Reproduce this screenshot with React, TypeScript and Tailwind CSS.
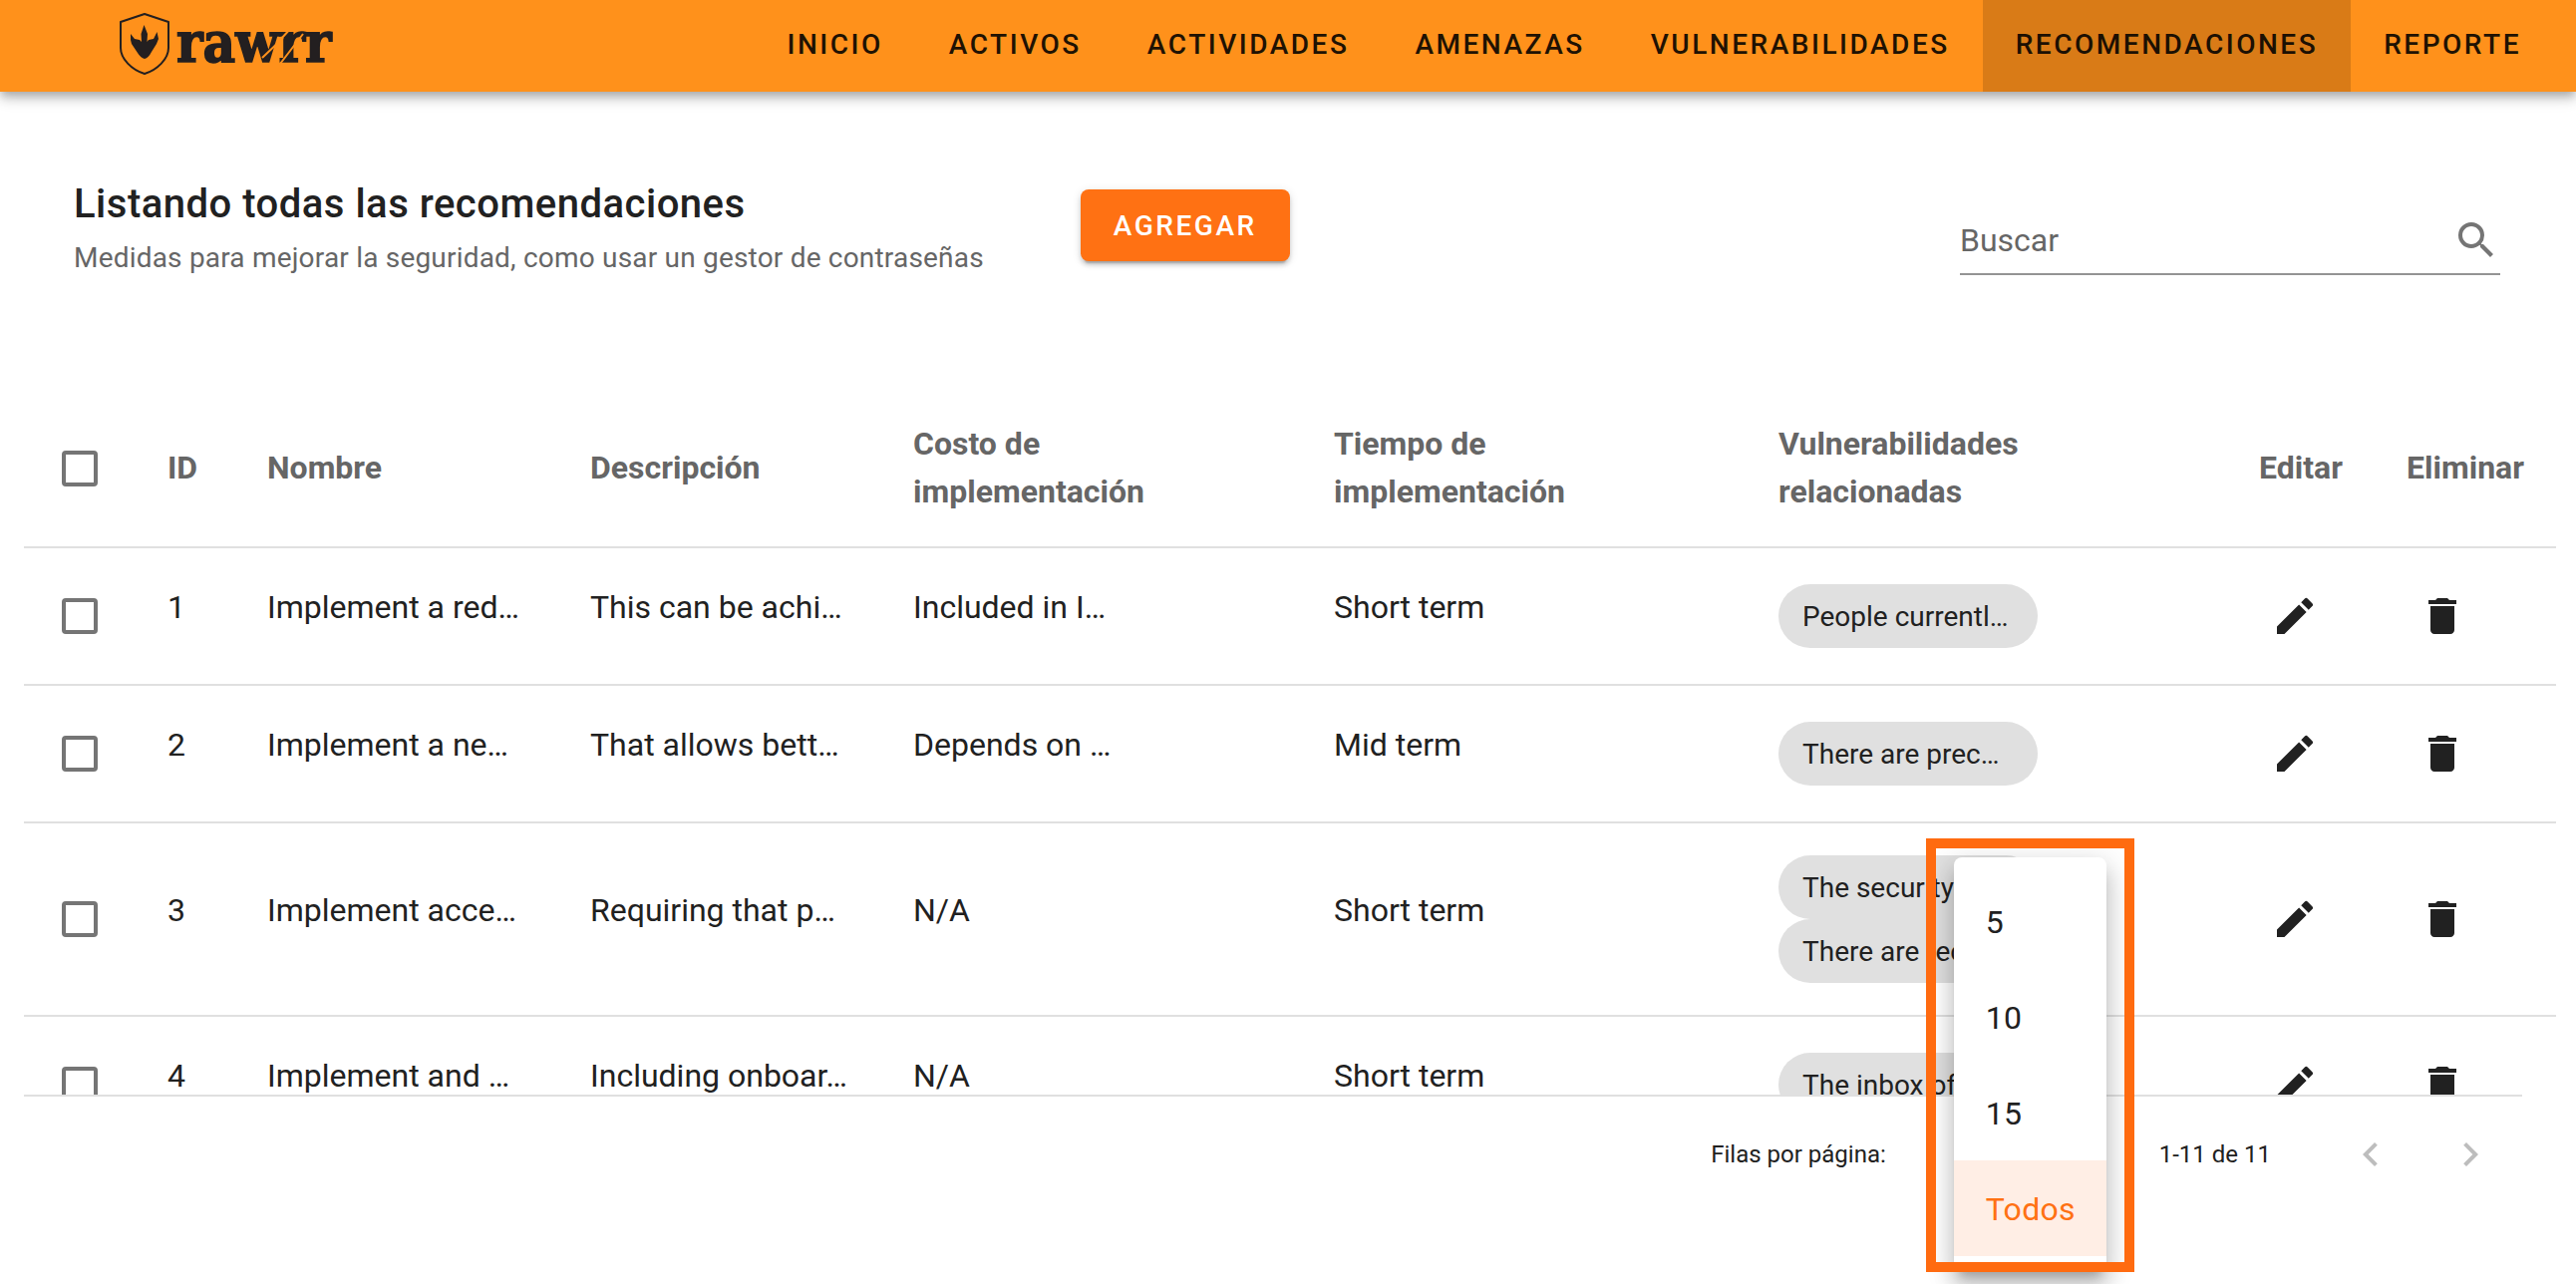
import React, { useState } from "react";
import { MdChevronLeft, MdChevronRight, MdDelete, MdEdit, MdSearch } from "react-icons/md";

type Recommendation = {
  id: number;
  name: string;
  description: string;
  cost: string;
  time: string;
  vulnerabilities: string[];
};

const navItems = [
  "Inicio",
  "Activos",
  "Actividades",
  "Amenazas",
  "Vulnerabilidades",
  "Recomendaciones",
  "Reporte",
];

const rows: Recommendation[] = [
  {
    id: 1,
    name: "Implement a red…",
    description: "This can be achi…",
    cost: "Included in I…",
    time: "Short term",
    vulnerabilities: ["People currentl…"],
  },
  {
    id: 2,
    name: "Implement a ne…",
    description: "That allows bett…",
    cost: "Depends on …",
    time: "Mid term",
    vulnerabilities: ["There are prec…"],
  },
  {
    id: 3,
    name: "Implement acce…",
    description: "Requiring that p…",
    cost: "N/A",
    time: "Short term",
    vulnerabilities: ["The security …", "There are rec…"],
  },
  {
    id: 4,
    name: "Implement and …",
    description: "Including onboar…",
    cost: "N/A",
    time: "Short term",
    vulnerabilities: ["The inbox of …"],
  },
];

const pageSizes = ["5", "10", "15", "Todos"];

function Logo() {
  return (
    <svg viewBox="0 0 220 64" className="h-16 w-[220px] overflow-visible" role="img" aria-label="rawrr">
      <path
        d="M25 2 L49 10 V36 C49 47 38 58 25 62 C12 58 1 47 1 36 V10 Z"
        fill="none"
        stroke="#231f20"
        strokeWidth="2"
        strokeLinejoin="round"
      />
      <path
        d="M11 22 L15 27 L20 28 L22 30 L21.5 22 L24.5 13 L28 22 L27.5 30 L29 28 L34 27 L37.5 20 L39 27 L37 32 L32 40 Q29 46 25 47 Q21 46 18 41 L12 32 L11 28 Z"
        fill="#231f20"
      />
      <text
        x="57"
        y="50"
        fill="#231f20"
        stroke="#231f20"
        strokeWidth="1.5"
        fontSize="56"
        fontWeight="700"
        fontFamily="'DejaVu Serif Condensed','DejaVu Serif',serif"
      >
        rawrr
      </text>
      <path d="M143 46 L164 26 M161 52 L184 22 M161 28 L173 15" stroke="#ff911b" strokeWidth="2" />
    </svg>
  );
}

function Checkbox({ label }: { label: string }) {
  return (
    <input
      type="checkbox"
      aria-label={label}
      className="block size-9 appearance-none rounded border-4 border-[#757575] checked:bg-[#ff7113]"
    />
  );
}

function Header() {
  return (
    <header className="relative z-10 flex h-[92px] items-stretch justify-between bg-[#ff911b] pl-[120px] pr-[22px] shadow-[0_4px_8px_-2px_rgba(0,0,0,0.2),0_8px_10px_0_rgba(0,0,0,0.14),0_2px_20px_0_rgba(0,0,0,0.12)]">
      <a href="#inicio" className="flex items-center pb-1">
        <Logo />
      </a>
      <nav className="flex">
        {navItems.map((item) => (
          <a
            key={item}
            href={"#" + item.toLowerCase()}
            className={
              item === "Recomendaciones"
                ? "flex items-center bg-[#d97b17] px-[33px] pb-0.5 text-[28px] font-medium uppercase tracking-[0.09em] text-[#1c1003]"
                : "flex items-center px-[33px] pb-0.5 text-[28px] font-medium uppercase tracking-[0.09em] text-[#1f1203]"
            }
          >
            {item}
          </a>
        ))}
      </nav>
    </header>
  );
}

function Toolbar() {
  return (
    <section className="flex items-start pl-[74px] pr-[76px] pt-20">
      <div className="pt-px">
        <h1 className="text-[40px] font-medium leading-[64px] tracking-[0.0125em]">
          Listando todas las recomendaciones
        </h1>
        <p className="mt-1 text-[28px] leading-9 tracking-[0.007em] text-[#666]">
          Medidas para mejorar la seguridad, como usar un gestor de contraseñas
        </p>
      </div>
      <button
        type="button"
        className="ml-[97px] mt-[18px] h-[72px] rounded-lg bg-[#ff7113] px-[33px] pt-0.5 text-[28px] font-medium uppercase tracking-[0.09em] text-white shadow-[0_6px_2px_-4px_rgba(0,0,0,0.2),0_4px_4px_0_rgba(0,0,0,0.14),0_2px_10px_0_rgba(0,0,0,0.12)]"
      >
        Agregar
      </button>
      <label className="ml-auto mt-11 flex h-[60px] w-[542px] items-center border-b-2 border-[#949494] pb-2">
        <input
          type="text"
          placeholder="Buscar"
          aria-label="Buscar"
          className="min-w-0 flex-1 bg-transparent text-[32px] outline-none placeholder:text-[#666]"
        />
        <MdSearch className="size-12 text-[#757575]" />
      </label>
    </section>
  );
}

function RecommendationTable() {
  return (
    <div className="ml-6 mr-5 mt-[114px] h-[707px] overflow-hidden">
      <table className="w-full table-fixed border-collapse text-left text-[32px] leading-[48px]">
        <colgroup>
          <col className="w-[112px]" />
          <col className="w-[100px]" />
          <col className="w-[324px]" />
          <col className="w-[324px]" />
          <col className="w-[422px]" />
          <col className="w-[446px]" />
          <col />
          <col className="w-[148px]" />
          <col className="w-[182px]" />
        </colgroup>
        <thead>
          <tr className="h-[158px] border-b-2 border-[#e0e0e0] text-[#666]">
            <th className="pl-[38px]">
              <Checkbox label="Seleccionar todas" />
            </th>
            <th className="pb-0.5 pl-8 font-bold">ID</th>
            <th className="pb-0.5 pl-8 font-bold">Nombre</th>
            <th className="pb-0.5 pl-8 font-bold">Descripción</th>
            <th className="pb-0.5 pl-8 pr-24 font-bold">Costo de implementación</th>
            <th className="pb-0.5 pl-8 pr-32 font-bold">Tiempo de implementación</th>
            <th className="pb-0.5 pl-8 pr-32 font-bold">Vulnerabilidades relacionadas</th>
            <th className="pb-0.5 pl-8 font-bold">Editar</th>
            <th className="pb-0.5 pl-8 font-bold">Eliminar</th>
          </tr>
        </thead>
        <tbody>
          {rows.map((row) => (
            <tr key={row.id} className="h-[138px] border-b-2 border-[#e0e0e0]">
              <td className="pl-[38px]">
                <Checkbox label={"Seleccionar " + row.id} />
              </td>
              <td className="pb-[18px] pl-8">{row.id}</td>
              <td className="pb-[18px] pl-8">{row.name}</td>
              <td className="pb-[18px] pl-8">{row.description}</td>
              <td className="pb-[18px] pl-8">{row.cost}</td>
              <td className="pb-[18px] pl-8">{row.time}</td>
              <td className="py-8 pl-8">
                {row.vulnerabilities.map((v) => (
                  <span
                    key={v}
                    className="flex h-16 w-[260px] items-center whitespace-nowrap rounded-full bg-[#e0e0e0] px-6 pt-0.5 text-[28px]"
                  >
                    {v}
                  </span>
                ))}
              </td>
              <td className="pl-8">
                <button type="button" aria-label={"Editar " + row.id} className="block p-3">
                  <MdEdit className="size-12" />
                </button>
              </td>
              <td className="pl-8">
                <button type="button" aria-label={"Eliminar " + row.id} className="block p-3">
                  <MdDelete className="size-12" />
                </button>
              </td>
            </tr>
          ))}
        </tbody>
      </table>
    </div>
  );
}

function PageSizeMenu() {
  const [selected, setSelected] = useState("Todos");
  return (
    <div className="relative ml-10 w-[209px] self-stretch">
      <div
        role="listbox"
        aria-label="Filas por página"
        className="absolute -bottom-[60px] left-7 w-[153px] rounded-lg bg-white py-4 shadow-[0_10px_10px_-6px_rgba(0,0,0,0.2),0_16px_20px_2px_rgba(0,0,0,0.14),0_6px_28px_4px_rgba(0,0,0,0.12)]"
      >
        {pageSizes.map((size) => (
          <button
            key={size}
            type="button"
            role="option"
            aria-selected={size === selected}
            onClick={() => setSelected(size)}
            className={
              size === selected
                ? "block h-24 w-full bg-[#ffeee5] pl-8 pt-0.5 text-left text-[32px] tracking-[0.01em] text-[#ff7113]"
                : "block h-24 w-full pl-8 pt-0.5 text-left text-[32px] tracking-[0.01em]"
            }
          >
            {size}
          </button>
        ))}
      </div>
      <div className="pointer-events-none absolute inset-x-0 -bottom-[60px] h-[435px] border-[10px] border-[#ff6b10]" />
    </div>
  );
}

function Pagination() {
  return (
    <footer className="ml-6 mr-[54px] flex h-[118px] items-center justify-end border-t-2 border-[#e0e0e0] pr-1 text-[24px]">
      <span>Filas por página:</span>
      <PageSizeMenu />
      <span className="ml-[25px] mr-[52px]">1-11 de 11</span>
      <div className="flex gap-1 text-[#bdbdbd]">
        <button type="button" disabled aria-label="Página anterior" className="p-6">
          <MdChevronLeft className="size-12" />
        </button>
        <button type="button" disabled aria-label="Página siguiente" className="p-6">
          <MdChevronRight className="size-12" />
        </button>
      </div>
    </footer>
  );
}

export default function App() {
  return (
    <div className="min-h-screen bg-white font-[Roboto,sans-serif] text-[#212121]">
      <Header />
      <main>
        <Toolbar />
        <RecommendationTable />
        <Pagination />
      </main>
    </div>
  );
}
